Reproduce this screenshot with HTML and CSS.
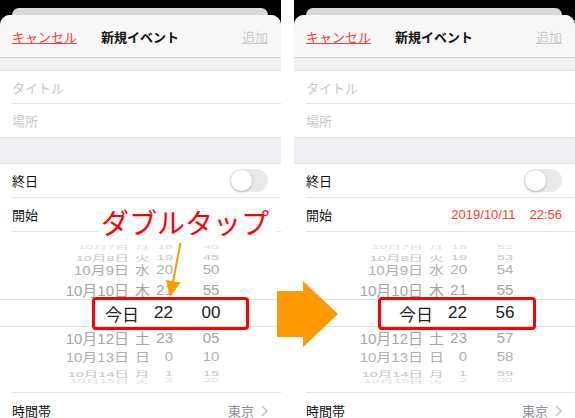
FILE: index.html
```html
<!DOCTYPE html>
<html lang="ja">

<head>
  <meta charset="UTF-8" />
  <meta name="viewport" content="width=device-width, initial-scale=1.0" />
  <title>ダブルタップで現在時刻</title>
  <link rel="stylesheet" href="styles.css">
</head>

<body>
  <main class="stage">
    <!-- Before: double tap the picker -->
    <section class="phone">
      <div class="back-card"></div>
      <div class="sheet">
        <header class="nav-bar">
          <span class="nav-cancel">キャンセル</span>
          <span class="nav-title">新規イベント</span>
          <span class="nav-add">追加</span>
        </header>
        <div class="band band-top"></div>
        <div class="group">
          <div class="row placeholder">タイトル</div>
          <div class="row placeholder last">場所</div>
        </div>
        <div class="band band-mid"></div>
        <div class="group">
          <div class="row">終日<span class="toggle"><span class="knob"></span></span></div>
          <div class="row">開始</div>
          <div class="picker">
            <div class="wheel-row r4"><span class="w-date">10月7日</span><span class="w-day">月</span><span class="w-hour">18</span><span class="w-min">40</span></div>
            <div class="wheel-row r3"><span class="w-date">10月8日</span><span class="w-day">火</span><span class="w-hour">19</span><span class="w-min">45</span></div>
            <div class="wheel-row r2"><span class="w-date">10月9日</span><span class="w-day">水</span><span class="w-hour">20</span><span class="w-min">50</span></div>
            <div class="wheel-row r1"><span class="w-date">10月10日</span><span class="w-day">木</span><span class="w-hour">21</span><span class="w-min">55</span></div>
            <div class="wheel-row r0"><span class="w-today">今日</span><span class="w-hour">22</span><span class="w-min">00</span></div>
            <div class="wheel-row r1 below"><span class="w-date">10月12日</span><span class="w-day">土</span><span class="w-hour">23</span><span class="w-min">05</span></div>
            <div class="wheel-row r2 below"><span class="w-date">10月13日</span><span class="w-day">日</span><span class="w-hour">0</span><span class="w-min">10</span></div>
            <div class="wheel-row r3"><span class="w-date">10月14日</span><span class="w-day">月</span><span class="w-hour">1</span><span class="w-min">15</span></div>
            <div class="wheel-row r4 tail"><span class="w-date">10月15日</span><span class="w-day">火</span><span class="w-hour">2</span><span class="w-min">20</span></div>
            <div class="highlight highlight-left"></div>
          </div>
          <div class="row row-zone">時間帯<span class="zone">東京
              <svg class="chevron" width="7" height="12" viewBox="0 0 7 12">
                <path d="M1 1l5 5-5 5" fill="none" stroke="#c4c4c7" stroke-width="1.5" />
              </svg></span></div>
        </div>
      </div>

      <!-- Annotation -->
      <div class="callout">ダブルタップ</div>
      <svg class="pointer" width="281" height="418" viewBox="0 0 281 418">
        <line x1="180.5" y1="243" x2="173" y2="282" stroke="#fd9a00" stroke-width="2" />
        <polygon points="170,297 166,280 180.5,282.5" fill="#fd9a00" />
      </svg>
    </section>

    <!-- After: current time is set -->
    <section class="phone">
      <div class="back-card"></div>
      <div class="sheet">
        <header class="nav-bar">
          <span class="nav-cancel">キャンセル</span>
          <span class="nav-title">新規イベント</span>
          <span class="nav-add">追加</span>
        </header>
        <div class="band band-top"></div>
        <div class="group">
          <div class="row placeholder">タイトル</div>
          <div class="row placeholder last">場所</div>
        </div>
        <div class="band band-mid"></div>
        <div class="group">
          <div class="row">終日<span class="toggle"><span class="knob"></span></span></div>
          <div class="row">開始<span class="start-value"><span>2019/10/11</span><span>22:56</span></span></div>
          <div class="picker">
            <div class="wheel-row r4"><span class="w-date">10月7日</span><span class="w-day">月</span><span class="w-hour">18</span><span class="w-min">52</span></div>
            <div class="wheel-row r3"><span class="w-date">10月8日</span><span class="w-day">火</span><span class="w-hour">19</span><span class="w-min">53</span></div>
            <div class="wheel-row r2"><span class="w-date">10月9日</span><span class="w-day">水</span><span class="w-hour">20</span><span class="w-min">54</span></div>
            <div class="wheel-row r1"><span class="w-date">10月10日</span><span class="w-day">木</span><span class="w-hour">21</span><span class="w-min">55</span></div>
            <div class="wheel-row r0"><span class="w-today">今日</span><span class="w-hour">22</span><span class="w-min">56</span></div>
            <div class="wheel-row r1 below"><span class="w-date">10月12日</span><span class="w-day">土</span><span class="w-hour">23</span><span class="w-min">57</span></div>
            <div class="wheel-row r2 below"><span class="w-date">10月13日</span><span class="w-day">日</span><span class="w-hour">0</span><span class="w-min">58</span></div>
            <div class="wheel-row r3"><span class="w-date">10月14日</span><span class="w-day">月</span><span class="w-hour">1</span><span class="w-min">59</span></div>
            <div class="wheel-row r4 tail"><span class="w-date">10月15日</span><span class="w-day">火</span><span class="w-hour">2</span><span class="w-min">00</span></div>
            <div class="highlight highlight-right"></div>
          </div>
          <div class="row row-zone">時間帯<span class="zone">東京
              <svg class="chevron" width="7" height="12" viewBox="0 0 7 12">
                <path d="M1 1l5 5-5 5" fill="none" stroke="#c4c4c7" stroke-width="1.5" />
              </svg></span></div>
        </div>
      </div>
    </section>

    <!-- Big arrow between the two screens -->
    <svg class="big-arrow" width="62" height="68" viewBox="0 0 62 68">
      <polygon points="0,10 26,10 26,0 61,33 26,66 26,56 0,56" fill="#fe9a00" />
    </svg>
  </main>
</body>

</html>
```

FILE: styles.css
```css
*,
*::after,
*::before {
  margin: 0;
  padding: 0;
  box-sizing: border-box;
}

body {
  width: 575px;
  height: 418px;
  overflow: hidden;
  background: #fff;
  font-family: "Liberation Sans", "Noto Sans CJK JP", sans-serif;
  font-size: 13px;
  color: #111;
}

.stage {
  position: relative;
  display: flex;
  gap: 13px;
  height: 418px;
}

/* Phone screen */
.phone {
  position: relative;
  width: 281px;
  height: 418px;
  overflow: hidden;
  background: #000;
}

.back-card {
  height: 7px;
  margin: 8px 13px 0 12px;
  background: #d9d9db;
  border-radius: 8px 8px 0 0;
}

.sheet {
  height: 420px;
  background: #efeff4;
  border-radius: 10px 10px 0 0;
  overflow: hidden;
}

.nav-bar {
  display: grid;
  grid-template-columns: 1fr auto 1fr;
  align-items: center;
  height: 43px;
  padding: 0 13px 0 12px;
  background: #f7f7f8;
  border-bottom: 1px solid #d3d3d6;
}

.nav-cancel {
  color: #ff3b30;
  text-decoration: underline;
}

.nav-title {
  font-weight: bold;
}

.nav-add {
  justify-self: end;
  color: #c7c7cc;
  text-decoration: underline;
}

.band-top {
  height: 12px;
}

.band-mid {
  height: 25px;
}

.group {
  background: #fff;
  border-top: 1px solid #e2e2e6;
  border-bottom: 1px solid #e2e2e6;
}

.row {
  display: flex;
  align-items: center;
  height: 34px;
  margin-left: 12px;
  padding-right: 13px;
  border-bottom: 1px solid #e2e2e6;
}

.row.last {
  height: 33px;
  border-bottom: none;
}

.placeholder {
  height: 33px;
  color: #c7c7cd;
}

.toggle {
  margin-left: auto;
  width: 38px;
  height: 23px;
  padding: 1px;
  border-radius: 12px;
  background: #e9e9eb;
}

.knob {
  display: block;
  width: 21px;
  height: 21px;
  border-radius: 50%;
  background: #fff;
  box-shadow: 0 1px 3px rgba(0, 0, 0, 0.25);
}

.start-value {
  display: flex;
  gap: 14px;
  margin-left: auto;
  color: #ff3b30;
}

.row-zone {
  border-top: 1px solid #e2e2e6;
  border-bottom: none;
  height: 36px;
}

.zone {
  display: flex;
  align-items: center;
  gap: 7px;
  margin-left: auto;
  color: #8e8e93;
}

/* Date picker wheel */
.picker {
  position: relative;
  height: 160px;
  padding: 9px 0 10px;
  overflow: hidden;
}

.wheel-row {
  display: grid;
  grid-template-columns: 129px 22px 22px 24px 28px;
  align-items: center;
  white-space: nowrap;
}

.w-date {
  grid-column: 1;
  text-align: right;
}

.w-day {
  grid-column: 2;
  padding-left: 6px;
}

.w-hour {
  grid-column: 3;
  text-align: right;
}

.w-min {
  grid-column: 5;
  text-align: center;
}

.w-today {
  grid-column: 1 / 3;
  text-align: right;
  padding-right: 12px;
}

.r4 {
  height: 8px;
  font-size: 14px;
  color: #dedede;
  transform: scaleY(0.35);
}

.r4.tail {
  height: 6px;
}

.r3 {
  height: 10px;
  font-size: 14.5px;
  color: #c4c4c4;
  transform: scaleY(0.55);
}

.r2 {
  height: 20px;
  font-size: 15px;
  color: #b0b0b0;
  transform: scaleY(0.82);
}

.r1 {
  height: 20px;
  font-size: 15px;
  color: #a5a5a5;
  transform: scaleY(0.95);
}

.r1.below,
.r2.below {
  height: 19px;
}

.r0 {
  height: 28px;
  font-size: 17px;
  color: #222;
  border-top: 1px solid #e4e4e4;
  border-bottom: 1px solid #e4e4e4;
}

.highlight {
  position: absolute;
  top: 65px;
  height: 33px;
  border: 3px solid #f00;
  border-radius: 4px;
}

.highlight-left {
  left: 92px;
  width: 157px;
}

.highlight-right {
  left: 84px;
  width: 158px;
}

/* Annotations */
.callout {
  position: absolute;
  left: 98px;
  top: 201px;
  height: 41px;
  padding: 0 8px 0 3px;
  background: #fff;
  color: #f00;
  font-family: "Noto Sans CJK JP", sans-serif;
  font-size: 28px;
  line-height: 42px;
}

.pointer {
  position: absolute;
  left: 0;
  top: 0;
}

.big-arrow {
  position: absolute;
  left: 277px;
  top: 281px;
}
```
